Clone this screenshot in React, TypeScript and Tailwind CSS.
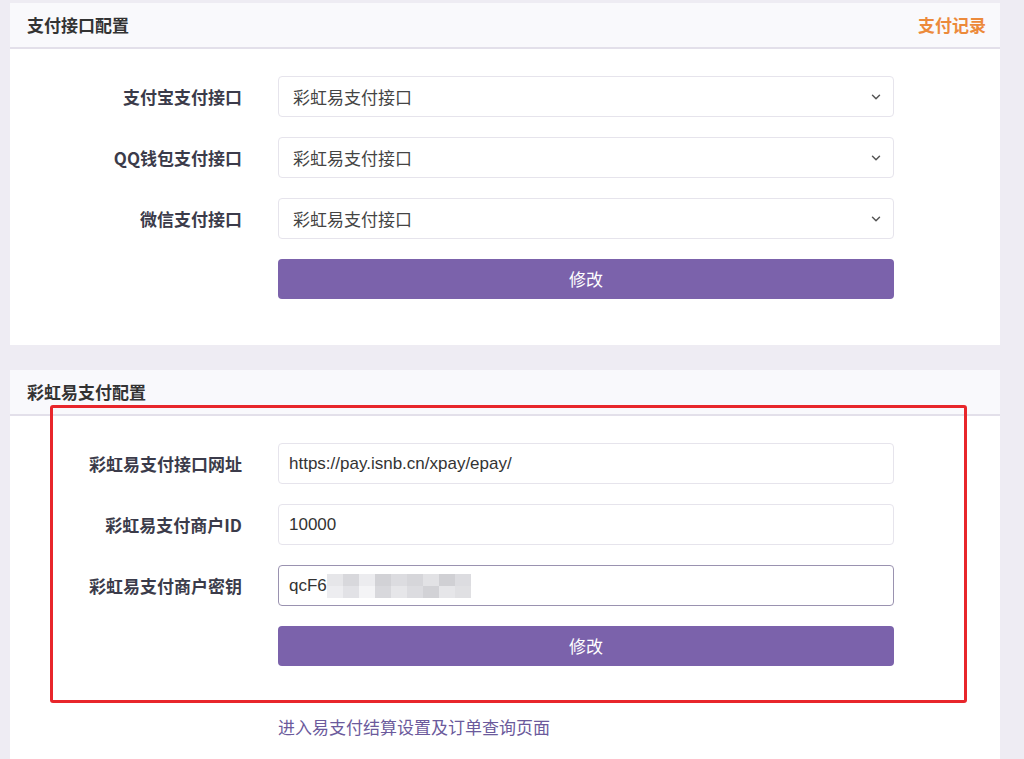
import { ChevronDown } from "lucide-react";

const font = { fontFamily: '"Noto Sans CJK SC", "Noto Sans", sans-serif' };

function Label({ children }: { children: React.ReactNode }) {
  return (
    <div className="w-[232px] shrink-0 text-right text-[17px] font-bold text-[#3b3b4a]">
      {children}
    </div>
  );
}

function SelectRow({ label }: { label: string }) {
  return (
    <div className="flex items-center gap-[36px]">
      <Label>{label}</Label>
      <div className="flex h-[41px] w-[616px] items-center justify-between rounded-[4px] border border-[#e6e4ec] bg-white pl-[14px] pr-[10px] text-[17px] text-[#444]">
        <span>彩虹易支付接口</span>
        <ChevronDown className="h-[14px] w-[14px] text-[#555]" strokeWidth={2.5} />
      </div>
    </div>
  );
}

function InputRow({
  label,
  value,
  focused,
  blur,
}: {
  label: string;
  value: string;
  focused?: boolean;
  blur?: boolean;
}) {
  return (
    <div className="flex items-center gap-[36px]">
      <Label>{label}</Label>
      <div
        className={
          "relative flex h-[41px] w-[616px] items-center rounded-[4px] border bg-white px-[10px] text-[17px] text-[#333] " +
          (focused ? "border-[#9a92b0]" : "border-[#e6e4ec]")
        }
        style={{ fontFamily: '"Liberation Sans", Arial, sans-serif' }}
      >
        <span>{value}</span>
        {blur && (
          <div className="flex h-[24px] items-center">
            <div className="grid grid-cols-9 grid-rows-2">
              {[
                "#e6e6e9", "#d8d8dc", "#ececef", "#d2d2d6", "#dcdce0", "#d6d6da", "#e2e2e5", "#d0d0d4", "#dcdce0",
                "#ededf0", "#e2e2e6", "#f4f4f6", "#d8d8dc", "#e6e6e9", "#dcdce0", "#d2d2d6", "#e6e6e9", "#e0e0e3",
              ].map((c, i) => (
                <div key={i} className="h-[12px] w-[16px]" style={{ backgroundColor: c }} />
              ))}
            </div>
          </div>
        )}
      </div>
    </div>
  );
}

function Button() {
  return (
    <div className="flex gap-[36px]">
      <div className="w-[232px] shrink-0" />
      <button className="h-[40px] w-[616px] rounded-[4px] bg-[#7b62ab] text-[17px] text-white">
        修改
      </button>
    </div>
  );
}

export default function App() {
  return (
    <div className="h-[759px] w-[1024px] overflow-hidden bg-[#eeecf3]" style={font}>
      <div className="flex w-[1000px] flex-col gap-[25px] pl-[10px] pt-[3px]">
        <section className="bg-white">
          <header className="flex h-[46px] items-center justify-between border-b-2 border-[#e3e0ea] bg-[#f9f9fc] pl-[17px] pr-[14px]">
            <h2 className="text-[17px] font-bold text-[#333]">支付接口配置</h2>
            <a className="text-[17px] font-bold text-[#ec8a3b]">支付记录</a>
          </header>
          <div className="flex flex-col gap-[20px] pb-[46px] pt-[27px]">
            <SelectRow label="支付宝支付接口" />
            <SelectRow label="QQ钱包支付接口" />
            <SelectRow label="微信支付接口" />
            <Button />
          </div>
        </section>

        <section className="relative h-[400px] bg-white">
          <header className="flex h-[46px] items-center border-b-2 border-[#e3e0ea] bg-[#f9f9fc] px-[17px]">
            <h2 className="text-[17px] font-bold text-[#333]">彩虹易支付配置</h2>
          </header>
          <div className="flex flex-col gap-[20px] pt-[27px]">
            <InputRow label="彩虹易支付接口网址" value="https://pay.isnb.cn/xpay/epay/" />
            <InputRow label="彩虹易支付商户ID" value="10000" />
            <InputRow label="彩虹易支付商户密钥" value="qcF6" focused blur />
            <Button />
          </div>
          <div className="flex gap-[36px] pt-[48px]">
            <div className="w-[232px] shrink-0" />
            <a className="text-[17px] text-[#6b5a9c]">进入易支付结算设置及订单查询页面</a>
          </div>
          <div className="pointer-events-none absolute left-[40px] top-[35px] h-[298px] w-[917px] rounded-[3px] border-[3px] border-[#e8262b]" />
        </section>
      </div>
    </div>
  );
}
